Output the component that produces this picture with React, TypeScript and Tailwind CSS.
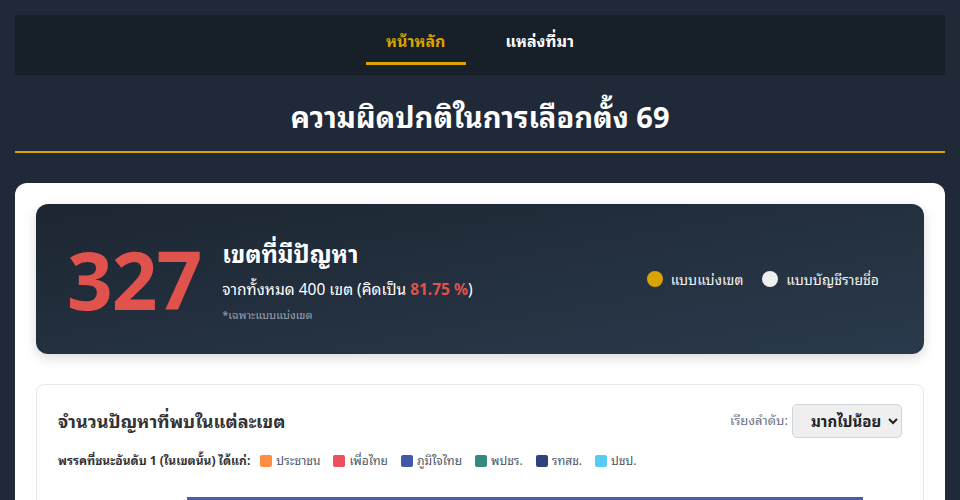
import React, { useState } from 'react';

const parties = [
  { name: 'ประชาชน', color: 'bg-[#ff8c42]' },
  { name: 'เพื่อไทย', color: 'bg-[#ec4f5e]' },
  { name: 'ภูมิใจไทย', color: 'bg-[#4358a6]' },
  { name: 'พปชร.', color: 'bg-[#338a7f]' },
  { name: 'รทสช.', color: 'bg-[#2e4379]' },
  { name: 'ปชป.', color: 'bg-[#55cdf2]' },
];

const App = () => {
  const [tab, setTab] = useState('home');
  const [sort, setSort] = useState('desc');

  return (
    <div
      className="min-h-screen bg-[#1f2937] p-[15px]"
      style={{ fontFamily: '"Noto Sans", "Noto Sans Thai Looped", "Noto Sans Thai", sans-serif' }}
    >
      {/* Nav */}
      <nav className="bg-[#171f29] h-[60px] flex justify-center items-start gap-[20px]">
        <button
          onClick={() => setTab('home')}
          className={`h-[50px] px-[20px] flex items-center justify-center text-[16px] font-bold border-b-[3px] pt-[4px] ${tab === 'home' ? 'text-[#d9a300] border-[#d9a300]' : 'text-white border-transparent'}`}
        >
          หน้าหลัก
        </button>
        <button
          onClick={() => setTab('source')}
          className={`h-[50px] px-[20px] flex items-center justify-center text-[16px] font-bold border-b-[3px] pt-[4px] ${tab === 'source' ? 'text-[#d9a300] border-[#d9a300]' : 'text-white border-transparent'}`}
        >
          แหล่งที่มา
        </button>
      </nav>

      {/* Title */}
      <div className="border-b-2 border-[#d9a300] pt-[24px] pb-[16px] text-center">
        <h1 className="text-[29px] font-bold text-white leading-[36px]">ความผิดปกติในการเลือกตั้ง 69</h1>
      </div>

      {/* Main card */}
      <div className="mt-[30px] bg-white rounded-[12px] p-[21px] pb-0">
        <div className="h-[150px] rounded-[12px] bg-gradient-to-br from-[#1d2632] to-[#2a3a4c] shadow-[0_4px_12px_rgba(0,0,0,0.15)] flex items-center pl-[31px] pr-[45px]">
          <div className="text-[80px] font-bold text-[#e0524c] leading-none tracking-[-1px]">327</div>
          <div className="ml-[21px] mt-[4px]">
            <div className="text-[24px] font-bold text-white leading-[30px]">เขตที่มีปัญหา</div>
            <div className="text-[15.5px] text-white mt-[9px]">
              จากทั้งหมด 400 เขต (คิดเป็น <span className="font-bold text-[#e0524c]">81.75 %</span>)
            </div>
            <div className="text-[11px] text-gray-400 mt-[6px]">*เฉพาะแบบแบ่งเขต</div>
          </div>
          <div className="ml-auto flex items-center gap-[19px] text-[14px] text-gray-100">
            <div className="flex items-center gap-[8px]">
              <span className="w-[16px] h-[16px] rounded-full bg-[#d9a300]" />
              แบบแบ่งเขต
            </div>
            <div className="flex items-center gap-[8px]">
              <span className="w-[16px] h-[16px] rounded-full bg-[#efefef]" />
              แบบบัญชีรายชื่อ
            </div>
          </div>
        </div>

        {/* Chart card */}
        <div className="mt-[30px] border border-gray-200 rounded-t-[8px] px-[21px] pt-[19px] h-[200px]">
          <div className="flex items-center justify-between">
            <h2 className="text-[18px] font-bold text-[#333]">จำนวนปัญหาที่พบในแต่ละเขต</h2>
            <div className="flex items-center gap-[4px] text-[13px] text-gray-500">
              เรียงลำดับ:
              <select
                value={sort}
                onChange={(e) => setSort(e.target.value)}
                className="w-[110px] h-[34px] rounded-[5px] border border-gray-300 bg-[#efefef] text-[15px] font-bold text-[#222] pl-[14px]"
              >
                <option value="desc">มากไปน้อย</option>
                <option value="asc">น้อยไปมาก</option>
              </select>
            </div>
          </div>
          <div className="flex items-center mt-[14px] text-[12px] text-gray-600">
            <span className="font-bold text-[#333] mr-[10px]">พรรคที่ชนะอันดับ 1 (ในเขตนั้น) ได้แก่:</span>
            {parties.map((p) => (
              <span key={p.name} className="flex items-center gap-[4px] mr-[13px]">
                <span className={`w-[12px] h-[12px] rounded-[2px] ${p.color}`} />
                {p.name}
              </span>
            ))}
          </div>
          <div className="ml-[129px] mr-[39px] mt-[27px] h-[20px] bg-[#455ea7]" />
        </div>
      </div>
    </div>
  );
};

export default App;
